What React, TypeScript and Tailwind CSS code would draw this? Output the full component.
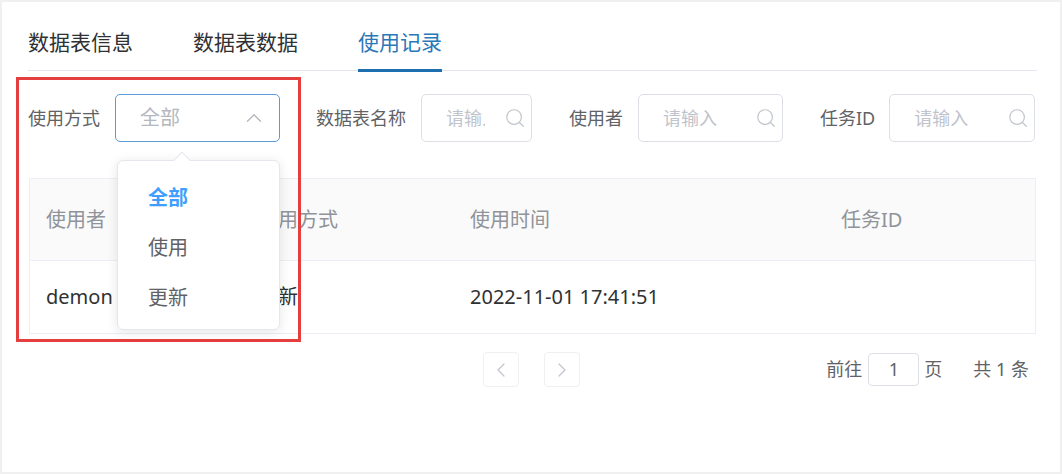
import React from "react";
import { Search, ChevronUp, ChevronLeft, ChevronRight } from "lucide-react";

const tabs = ["数据表信息", "数据表数据", "使用记录"];

function SearchInput({ width, pr = "pr-[40px]" }: { width: string; pr?: string }) {
  return (
    <div className={`relative h-[48px] ${width}`}>
      <input
        placeholder="请输入"
        className={`h-full w-full rounded-[5px] border border-[#dcdfe6] bg-white pl-[24px] ${pr} text-[18px] text-[#606266] outline-none placeholder:text-[#c0c4cc]`}
      />
      <Search
        size={22}
        strokeWidth={1.3}
        className="absolute right-[6px] top-1/2 -translate-y-1/2 text-[#c0c4cc]"
      />
    </div>
  );
}

export default function App() {
  return (
    <div className="h-[474px] w-[1062px] bg-[#f0f0f0] p-[2px] font-['Noto_Sans','Noto_Sans_CJK_SC',sans-serif]">
      <div className="relative h-full w-full bg-white pl-[26px] pr-[23px] pt-[12px]">
        {/* tabs */}
        <div className="flex h-[57px] gap-[60px] border-b border-[#e4e7ed]">
          {tabs.map((t, i) => (
            <div
              key={t}
              className={`relative flex items-center text-[21px] leading-none ${
                i === 2 ? "text-[#2a78b8]" : "text-[#303133]"
              }`}
            >
              {t}
              {i === 2 && (
                <div className="absolute bottom-[-2px] left-0 right-0 h-[3px] bg-[#1e6fb0]" />
              )}
            </div>
          ))}
        </div>

        {/* filters */}
        <div className="mt-[23px] flex items-center text-[18px] text-[#606266]">
          <span>使用方式</span>
          <div className="relative ml-[15px] h-[48px] w-[165px]">
            <div className="flex h-full items-center justify-between rounded-[5px] border border-[#5b9bd5] pl-[24px] pr-[12px]">
              <span className="text-[20px] text-[#b4b7bd]">全部</span>
              <ChevronUp size={26} strokeWidth={1.2} className="text-[#b4b7bd]" />
            </div>
            <div className="absolute left-[2px] top-[66px] z-10 w-[163px] rounded-[6px] border border-[#e4e7ed] bg-white pb-[6px] pt-[12px] shadow-[0_2px_12px_rgba(0,0,0,0.1)]">
              <div className="absolute left-[58px] top-[-7px] h-[12px] w-[12px] rotate-45 border-l border-t border-[#e4e7ed] bg-white" />
              <div className="flex h-[50px] items-center pl-[30px] text-[20px] font-bold text-[#409eff]">全部</div>
              <div className="flex h-[50px] items-center pl-[30px] text-[20px] text-[#606266]">使用</div>
              <div className="flex h-[50px] items-center pl-[30px] text-[20px] text-[#606266]">更新</div>
            </div>
          </div>
          <span className="ml-[36px]">数据表名称</span>
          <div className="ml-[15px]">
            <SearchInput width="w-[111px]" pr="pr-[46px]" />
          </div>
          <span className="ml-[37px]">使用者</span>
          <div className="ml-[15px]">
            <SearchInput width="w-[145px]" />
          </div>
          <span className="ml-[37px]">任务ID</span>
          <div className="ml-[14px]">
            <SearchInput width="w-[146px]" />
          </div>
        </div>

        {/* table */}
        <div className="ml-[1px] mt-[36px] w-[1007px] border border-[#ebeef5] text-[20px]">
          <div className="grid h-[82px] grid-cols-[212px_212px_371px_1fr] items-center border-b border-[#ebeef5] bg-[#fafafa] text-[#909399]">
            <div className="pl-[16px]">使用者</div>
            <div className="pl-[16px]">使用方式</div>
            <div className="pl-[16px]">使用时间</div>
            <div className="pl-[16px]">任务ID</div>
          </div>
          <div className="grid h-[72px] grid-cols-[212px_212px_371px_1fr] items-center text-[#303133]">
            <div className="pl-[16px]">demon</div>
            <div className="pl-[16px]">更新</div>
            <div className="pl-[16px]">2022-11-01 17:41:51</div>
            <div className="pl-[16px]"></div>
          </div>
        </div>

        {/* pagination */}
        <div className="mt-[18px] flex w-[1008px] items-center text-[18px] text-[#606266]">
          <div className="ml-[455px] flex h-[35px] w-[36px] items-center justify-center rounded-[4px] border border-[#f0f0f0] text-[#c0c4cc]">
            <ChevronLeft size={24} strokeWidth={1.2} />
          </div>
          <div className="ml-[25px] flex h-[35px] w-[36px] items-center justify-center rounded-[4px] border border-[#f0f0f0] text-[#c0c4cc]">
            <ChevronRight size={24} strokeWidth={1.2} />
          </div>
          <div className="ml-auto mr-[7px] flex items-center">
            <span>前往</span>
            <div className="ml-[6px] flex h-[33px] w-[51px] items-center justify-center rounded-[4px] border border-[#dcdfe6] text-[#606266]">
              1
            </div>
            <span className="ml-[5px]">页</span>
            <span className="ml-[31px]">共 1 条</span>
          </div>
        </div>

        {/* annotation */}
        <div className="pointer-events-none absolute left-[14px] top-[75px] h-[265px] w-[285px] border-[3px] border-[#e53e3e]" />
      </div>
    </div>
  );
}
